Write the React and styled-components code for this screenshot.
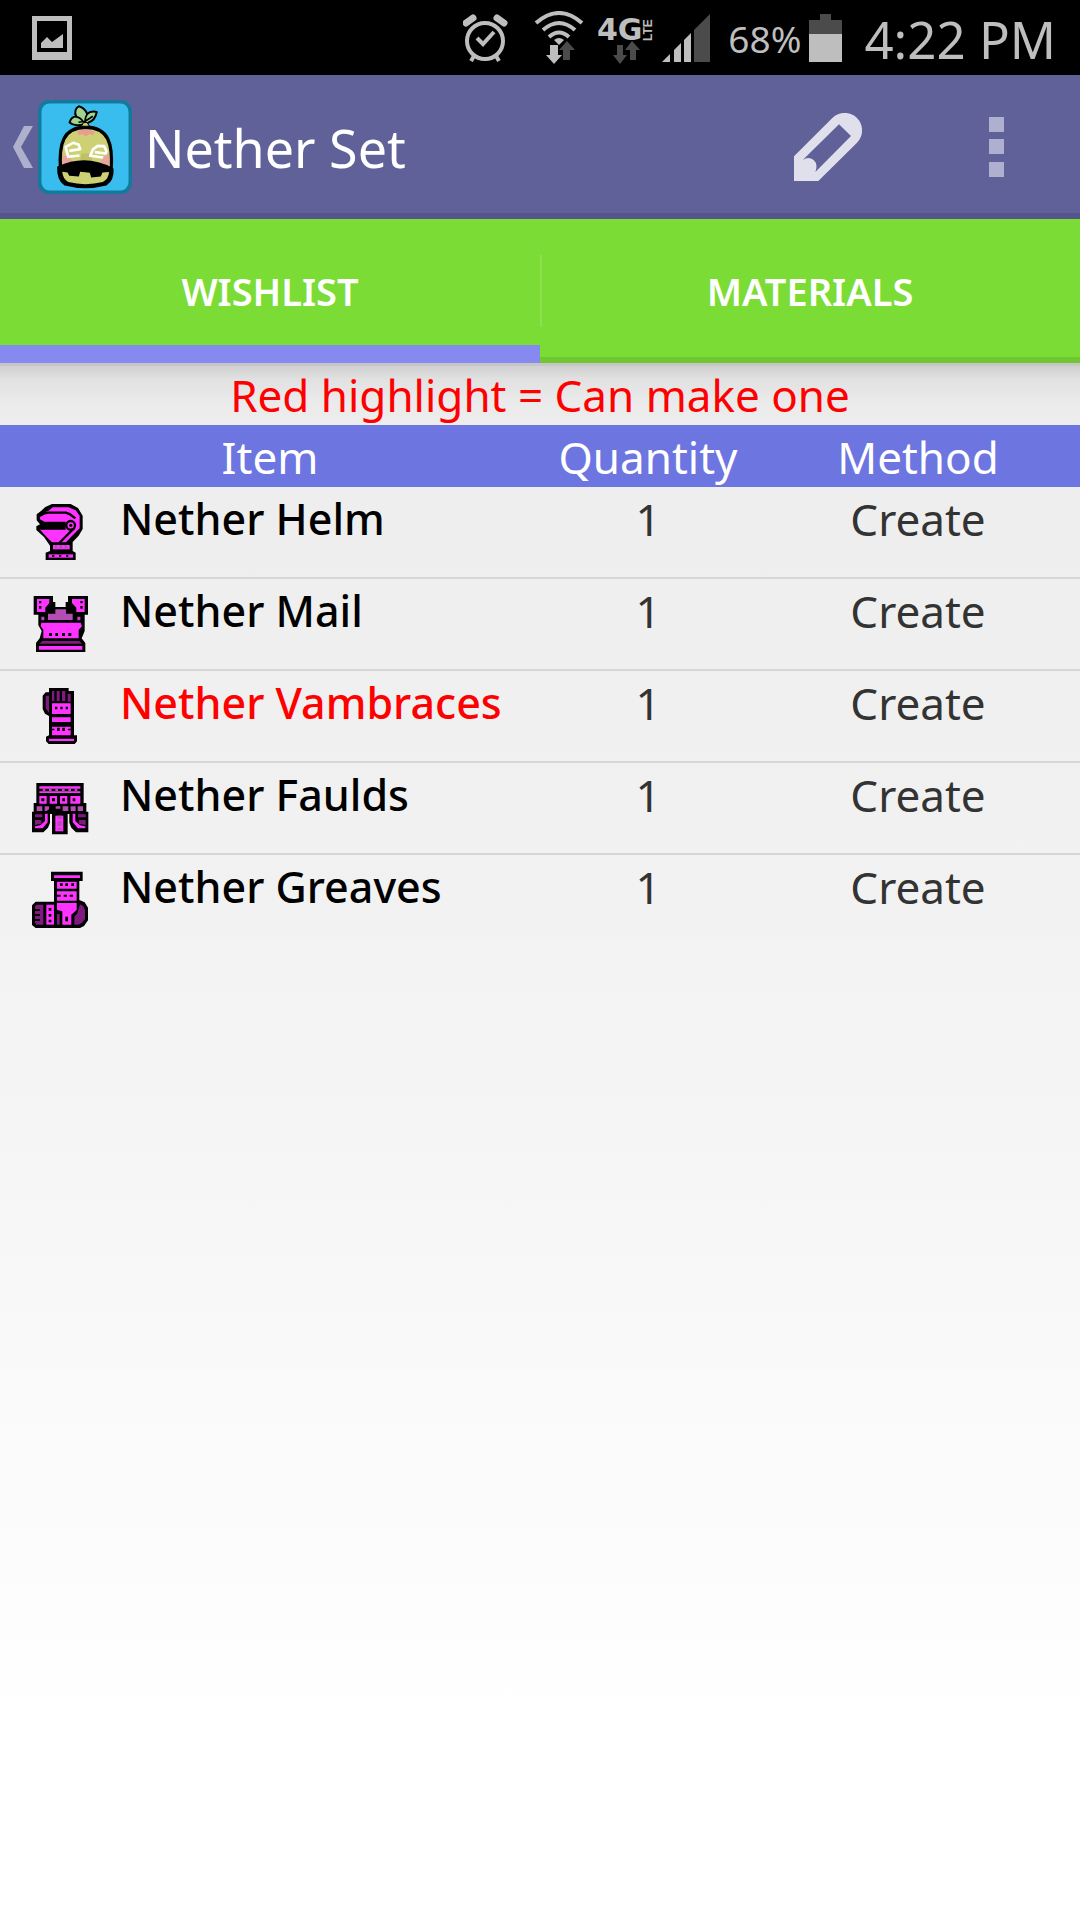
import { useState } from 'react';
import styled, { createGlobalStyle } from 'styled-components';

const colors = {
    status: '#bebebe',
    statusDim: '#4b4b4b',
    bar: '#5f6198',
    barEdge: '#54558a',
    tabs: '#7bdc36',
    tabsEdge: '#70c731',
    indicator: '#868af0',
    header: '#6d75e1',
    highlight: '#ff0000',
    sprite: '#ff33ff',
    spriteMid: '#b34db3',
    spriteDark: '#801a80',
};

const GlobalStyle = createGlobalStyle`
    * {
        box-sizing: border-box;
    }
    body {
        margin: 0;
        font-family: 'Noto Sans', 'Open Sans', sans-serif;
    }
    button {
        font-family: inherit;
    }
`

const Screen = styled.div`
    display: flex;
    flex-direction: column;
    min-height: 100vh;
    background: linear-gradient(#ebebeb 18%, #eeeeee 26%, #f2f2f2 48%, #ffffff 90%);
`

const StatusBar = styled.div`
    display: flex;
    align-items: center;
    height: 75px;
    padding: 0 24px 0 32px;
    background: #000;
    color: ${colors.status};
`

const StatusIcons = styled.div`
    display: flex;
    align-items: center;
    gap: 8px;
    margin-left: auto;
`

const StatusText = styled.span`
    font-size: ${({ $large }) => ($large ? 51 : 37)}px;
    line-height: 68px;
    white-space: nowrap;
    padding: 3px 0 0 ${({ $large }) => ($large ? 14 : 10)}px;
`

const AppBar = styled.header`
    display: flex;
    align-items: center;
    height: 144px;
    padding-left: 13px;
    background: ${colors.bar};
    box-shadow: inset 0 -6px ${colors.barEdge};
`

const BackLink = styled.a`
    display: flex;
    align-items: center;
    gap: 5px;
`

const Title = styled.h1`
    flex: 1;
    margin: 0;
    padding: 2px 0 0 13px;
    color: #fff;
    font-size: 52px;
    font-weight: 400;
    line-height: 70px;
`

const BarButton = styled.button`
    display: flex;
    align-items: center;
    justify-content: center;
    width: 168px;
    height: 138px;
    padding: 0;
    border: 0;
    background: none;
    cursor: pointer;
`

const Tabs = styled.div`
    display: flex;
    background: ${colors.tabs};
    box-shadow: inset 0 -6px ${colors.tabsEdge};
`

const Tab = styled.button`
    flex: 1;
    height: 144px;
    padding: 18px 0 0;
    border: 0;
    border-bottom: 18px solid ${({ $active }) => ($active ? colors.indicator : 'transparent')};
    background: none;
    color: #fff;
    font-size: 38px;
    font-weight: 600;
    text-transform: uppercase;
    cursor: pointer;

    & + & {
        background: linear-gradient(#8ee052, #8ee052) 0 36px / 2px 72px no-repeat;
    }
`

const ItemTable = styled.table`
    width: 100%;
    border-spacing: 0;
    table-layout: fixed;
    font-size: 44px;
    line-height: 60px;
`

const Legend = styled.caption`
    padding-top: 2px;
    color: ${colors.highlight};
    background: linear-gradient(#c6c6c6 3px, #d0d0d0 3px, #e1e1e1 16px, #ebebeb 40px, transparent);
`

const Column = styled.col`
    width: ${({ $share }) => $share}%;
`

const HeadCell = styled.th`
    padding: 2px 0 0;
    background: ${colors.header};
    color: #fff;
    font-weight: 400;
`

const ItemRow = styled.tr`
    &:not(:last-child) > td {
        border-bottom: 2px solid #d6d6d6;
    }
`

const Cell = styled.td`
    height: 92px;
    padding: 2px 0 0;
    color: #333;
    text-align: center;
    vertical-align: top;
`

const ItemCell = styled(Cell)`
    text-align: left;
`

const ItemLabel = styled.div`
    display: flex;
    gap: 30px;
    padding-left: 30px;
    color: ${({ $canMake }) => ($canMake ? colors.highlight : '#000')};
    font-size: 43px;
    font-weight: 500;
    white-space: nowrap;
`

const Sprite = styled.svg`
    flex: none;
    width: 60px;
    height: 60px;
    margin-top: 11px;
`

function PictureIcon() {
    return (
        <svg width="40" height="44" viewBox="0 0 40 44" fill={colors.status}>
            <path fillRule="evenodd" d="M0 0H40V44H0ZM5 5V36H35V5Z" />
            <path d="M9 32V27L15 21L20 26L31 18V32Z" />
        </svg>
    );
}

function AlarmIcon() {
    return (
        <svg width="63" height="48" viewBox="0 0 63 48" fill="none" stroke={colors.status}>
            <circle cx="22" cy="27" r="18" strokeWidth="4" />
            <path d="M14 24L20 30L31 18" strokeWidth="4" />
            <path d="M11 42L8 47M33 42L36 47" strokeWidth="4" />
            <path d="M3 9L10 4M41 9L34 4" strokeWidth="7" strokeLinecap="round" />
        </svg>
    );
}

function WifiIcon() {
    return (
        <svg width="56" height="54" viewBox="0 0 56 54">
            <g fill="none" stroke={colors.status} strokeWidth="4">
                <path d="M2 12Q25 -8 48 12" />
                <path d="M9 19Q25 5 41 19" />
                <path d="M15 26Q25 17 35 26" />
            </g>
            <path d="M20 29Q25 25 30 29L25 34Z" fill={colors.status} />
            <path d="M16 34H24V44H28L20 53L12 44H16Z" fill={colors.status} />
            <path d="M29 49V39H25L33 30L41 39H36V49Z" fill={colors.statusDim} />
        </svg>
    );
}

function NetworkIcon() {
    return (
        <svg width="56" height="54" viewBox="0 0 56 54" fill={colors.status}>
            <text x="-1" y="29" fontFamily="DejaVu Sans, sans-serif" fontWeight="700" fontSize="30">4G</text>
            <text transform="translate(54 30) rotate(-90)" fontFamily="Liberation Sans, sans-serif" fontWeight="700" fontSize="12">LTE</text>
            <path d="M19 34H25V44H29L22 53L15 44H19Z" fill={colors.statusDim} />
            <path d="M32 49V39H27L34 30L42 39H38V49Z" fill={colors.statusDim} />
        </svg>
    );
}

function SignalIcon() {
    return (
        <svg width="48" height="48" viewBox="0 0 48 48" fill={colors.status}>
            <path d="M0 48L8 40V48Z" />
            <path d="M12 48V36L19 29V48Z" />
            <path d="M22 48V26L29 19V48Z" />
            <path d="M32 48V16L48 0V48Z" fill={colors.statusDim} />
        </svg>
    );
}

function BatteryIcon() {
    return (
        <svg width="33" height="48" viewBox="0 0 33 48">
            <path d="M0 6H11V0H22V6H33V20H0Z" fill={colors.statusDim} />
            <path d="M0 20H33V48H0Z" fill={colors.status} />
        </svg>
    );
}

function BackIcon() {
    return (
        <svg width="20" height="42" viewBox="0 0 20 42">
            <path d="M11 0H20L8 21L20 42H11L0 21Z" fill="#afb0cc" />
        </svg>
    );
}

function Logo() {
    return (
        <svg width="94" height="94" viewBox="114 30 283 283" strokeLinejoin="round">
            <rect x="119" y="35" width="273" height="273" rx="30" fill="#38bdee" stroke="#147a9c" strokeWidth="11" />
            <path d="M182 240C176 160 190 113 258 112C326 113 340 160 334 240Z" fill="#cdd174" stroke="#000" strokeWidth="10" />
            <path d="M188 196Q212 196 230 236H186ZM328 190Q308 200 290 236H330Z" fill="#eba39d" />
            <path d="M232 124Q258 112 286 126L279 136L268 132L258 140L248 132L236 136Z" fill="#eb9c92" />
            <path d="M246 190L240 214H278L271 190Z" fill="#c1c064" />
            <path d="M255 101C240 108 220 108 209 98C213 84 221 80 229 80C222 66 228 53 237 49C251 53 258 62 262 72C270 64 282 64 291 66C288 82 279 94 264 99Z" fill="#a3d391" stroke="#000" strokeWidth="6" />
            <path d="M228 80Q243 83 252 98M263 71Q255 82 256 98M236 97L256 94L279 79" fill="none" stroke="#000" strokeWidth="5" />
            <path d="M245 109L251 98H262L269 109Z" fill="#cdd174" stroke="#000" strokeWidth="3" />
            <path d="M175 233Q257 195 338 238Q340 270 319 284Q257 300 195 284Q174 270 175 233Z" fill="#000" stroke="#000" strokeWidth="7" />
            <path d="M187 246L203 248L208 258L237 260L241 246L270 249L274 263L303 260L308 248L328 247Q326 270 309 277Q257 290 205 277Q189 268 187 246Z" fill="#cdd174" />
            <g fill="none" stroke="#fff" strokeWidth="8">
                <path d="M239 197L205 201L197 171L220 159L236 164L241 178L208 183" />
                <path d="M310 203L271 198L280 178L294 168L313 169L320 184L318 191L285 187" />
            </g>
        </svg>
    );
}

function PencilIcon() {
    return (
        <svg width="68" height="68" viewBox="222 339 204 204" fill="#e0e0ec">
            <path
                fillRule="evenodd"
                d="M222 469L337 354A52 52 0 0 1 411 428L295 543H222ZM357 373L249 479Q266 468 281 480Q295 492 286 516L393 408Z"
            />
        </svg>
    );
}

function MoreIcon() {
    return (
        <svg width="15" height="60" viewBox="0 0 15 60" fill="#afb0cf">
            <path d="M0 0H15V15H0ZM0 22H15V37H0ZM0 45H15V60H0Z" />
        </svg>
    );
}

function HelmSprite() {
    return (
        <Sprite viewBox="30 15 180 180">
            <path d="M96 27H152L174 39L188 62V102L176 122L158 141V168L167 173V195H77V173L90 168V152L72 126L49 105V94L60 88L50 76V58L63 48L76 36Z" fill="#000" />
            <path d="M86 47L98 37H146L167 46L179 62V100L150 129L138 142H96L80 126L60 104H137V80H73L60 73V66L70 61L78 50Z" fill={colors.sprite} />
            <path d="M64 57L84 53H138L150 58L166 70M164 98L118 144" fill="none" stroke="#000" strokeWidth="7" />
            <circle cx="152" cy="91" r="13" fill={colors.sprite} stroke="#000" strokeWidth="7" />
            <circle cx="152" cy="91" r="5" fill="#000" />
            <path d="M99 150H149V163H99Z" fill={colors.sprite} />
            <path d="M105 150H111V163H105ZM119 150H126V163H119ZM134 150H141V163H134Z" fill={colors.spriteMid} />
            <path d="M86 178H159V188H86Z" fill={colors.sprite} />
            <path d="M96 180H103V185H96ZM117 180H124V185H117ZM138 180H145V185H138Z" fill="#000" />
        </Sprite>
    );
}

function MailSprite() {
    return (
        <Sprite viewBox="30 15 180 180">
            <path d="M41 27H99V45H106V60H137V45H144V27H204V83H194V132L185 154L196 168V197H48V168L59 154L65 132L55 115V83H41Z" fill="#000" />
            <path d="M51 36H88V48L76 62V75H51ZM156 36H194V75H169V62L156 48Z" fill={colors.sprite} />
            <path d="M57 42H64V49H57ZM57 57H64V65H57ZM181 42H188V49H181ZM181 57H188V65H181Z" fill="#000" />
            <path d="M106 67H138V80H158V99H84V80H106Z" fill={colors.spriteMid} />
            <path d="M64 89H73V100H64ZM172 89H181V100H172Z" fill={colors.spriteMid} />
            <path d="M64 107H182L186 118L176 128V154H70V128L62 118Z" fill={colors.sprite} />
            <path d="M87 138H96V147H87ZM106 138H114V147H106ZM126 138H135V147H126ZM145 138H154V147H145Z" fill="#000" />
            <path d="M67 162H178L186 170H59Z" fill={colors.spriteDark} />
            <path d="M57 177H187V188H57Z" fill={colors.sprite} />
        </Sprite>
    );
}

function VambraceSprite() {
    return (
        <Sprite viewBox="30 15 180 180">
            <path d="M87 27H146V36H162V169H171V187L164 195H86L78 187V173L87 169V111L75 104L68 90V50L77 40H87Z" fill="#000" />
            <path d="M77 50H87V101L77 88ZM96 36H103V66H96ZM110 36H119V66H110ZM126 36H136V66H126ZM143 45H152V68H143Z" fill={colors.spriteDark} />
            <path d="M96 73H152V105H96ZM96 115H152V129H96ZM96 143H152V169H96ZM87 179H162V186H87Z" fill={colors.sprite} />
            <path d="M105 83H112V91H105ZM121 83H128V91H121ZM137 83H144V91H137Z" fill="#000" />
            <path d="M96 149H103V154H96ZM111 146H119V156H111ZM127 146H135V156H127ZM144 149H152V154H144Z" fill="#000" />
        </Sprite>
    );
}

function FauldsSprite() {
    return (
        <Sprite viewBox="30 15 180 180">
            <path d="M49 36H191V96H199V122H205V184H168L154 170L148 155V129H143V190H96V129H90V155L84 170L70 184H36V122H41V96H49Z" fill="#000" />
            <path d="M58 46H181V53H58ZM58 61H181V66H58ZM58 75H80V98H58ZM89 75H111V98H89ZM120 75H142V98H120ZM151 75H181V98H151Z" fill={colors.sprite} />
            <path d="M68 53H76V61H68ZM87 53H95V61H87ZM106 53H114V61H106ZM126 53H134V61H126ZM145 53H153V61H145ZM164 53H172V61H164Z" fill={colors.spriteMid} />
            <path d="M64 82H73V91H64ZM96 82H105V91H96ZM127 82H135V91H127ZM158 82H166V91H158Z" fill="#000" />
            <path d="M50 106H67V120H50ZM74 106H87V115L80 120H74ZM107 106H121V113H107ZM128 106H145V120H128ZM152 106H167V120H152ZM173 106H189V120H173Z" fill={colors.spriteMid} />
            <path d="M45 130H67V139H45ZM45 147H64V158L45 162ZM174 130H197V139H174ZM177 147H197V162L177 158Z" fill={colors.spriteDark} />
            <path d="M75 128H83V154L68 172H45V166L61 163L75 150ZM158 128H166V150L180 163L196 166V172H174L158 154Z" fill={colors.sprite} />
            <path d="M106 134H130V181H106Z" fill={colors.sprite} />
            <path d="M112 134H125V143H112ZM112 150H125V165H112ZM112 171H125V176H112Z" fill={colors.spriteMid} />
        </Sprite>
    );
}

function GreavesSprite() {
    return (
        <Sprite viewBox="30 24 180 180">
            <path d="M93 35H188V63H178V120L194 127L204 143V181L192 198L180 204H47L36 195V136L47 125H102V63H93Z" fill="#000" />
            <path d="M102 46H180V54H102ZM111 65H170V86H111ZM111 94H170V122H111Z" fill={colors.sprite} />
            <path d="M120 70H128V78H120ZM136 70H144V78H136ZM154 70H162V78H154ZM111 104H122V110H111ZM131 104H141V110H131ZM149 104H159V110H149Z" fill="#000" />
            <path d="M111 129H170V150L154 164V194H127V154L111 150Z" fill={colors.sprite} />
            <path d="M136 170H144V184H136Z" fill="#000" />
            <path d="M79 134H102V194H79Z" fill={colors.sprite} />
            <path d="M86 144H94V152H86ZM86 162H94V170H86ZM86 179H94V187H86Z" fill="#000" />
            <path d="M49 134H70V194H49L45 188V140ZM180 133L190 139L195 150V177L186 188L175 194H163V170L172 160Z" fill={colors.spriteDark} />
            <path d="M111 162H119V194H111Z" fill={colors.spriteDark} />
            <path d="M44 147H60V153H44ZM44 162H60V168H44ZM44 177H60V183H44Z" fill="#000" />
        </Sprite>
    );
}

const items = [
    { name: 'Nether Helm', quantity: 1, method: 'Create', Icon: HelmSprite },
    { name: 'Nether Mail', quantity: 1, method: 'Create', Icon: MailSprite },
    { name: 'Nether Vambraces', quantity: 1, method: 'Create', Icon: VambraceSprite, canMake: true },
    { name: 'Nether Faulds', quantity: 1, method: 'Create', Icon: FauldsSprite },
    { name: 'Nether Greaves', quantity: 1, method: 'Create', Icon: GreavesSprite },
];

const tabs = ['Wishlist', 'Materials'];

function App() {
    const [activeTab, setActiveTab] = useState('Wishlist');

    return (
        <Screen>
            <GlobalStyle />
            <StatusBar>
                <PictureIcon />
                <StatusIcons>
                    <AlarmIcon />
                    <WifiIcon />
                    <NetworkIcon />
                    <SignalIcon />
                    <StatusText>68%</StatusText>
                    <BatteryIcon />
                    <StatusText $large>4:22 PM</StatusText>
                </StatusIcons>
            </StatusBar>

            <AppBar>
                <BackLink href="#" aria-label="Back">
                    <BackIcon />
                    <Logo />
                </BackLink>
                <Title>Nether Set</Title>
                <BarButton type="button" aria-label="Edit">
                    <PencilIcon />
                </BarButton>
                <BarButton type="button" aria-label="More options">
                    <MoreIcon />
                </BarButton>
            </AppBar>

            <Tabs role="tablist">
                {tabs.map((tab) => (
                    <Tab
                        key={tab}
                        type="button"
                        role="tab"
                        aria-selected={tab === activeTab}
                        $active={tab === activeTab}
                        onClick={() => setActiveTab(tab)}
                    >
                        {tab}
                    </Tab>
                ))}
            </Tabs>

            <ItemTable>
                <Legend>Red highlight = Can make one</Legend>
                <colgroup>
                    <Column $share={50} />
                    <Column $share={20} />
                    <Column $share={30} />
                </colgroup>
                <thead>
                    <tr>
                        <HeadCell scope="col">Item</HeadCell>
                        <HeadCell scope="col">Quantity</HeadCell>
                        <HeadCell scope="col">Method</HeadCell>
                    </tr>
                </thead>
                <tbody>
                    {items.map(({ name, quantity, method, Icon, canMake }) => (
                        <ItemRow key={name}>
                            <ItemCell>
                                <ItemLabel $canMake={canMake}>
                                    <Icon />
                                    {name}
                                </ItemLabel>
                            </ItemCell>
                            <Cell>{quantity}</Cell>
                            <Cell>{method}</Cell>
                        </ItemRow>
                    ))}
                </tbody>
            </ItemTable>
        </Screen>
    );
}

export default App;
